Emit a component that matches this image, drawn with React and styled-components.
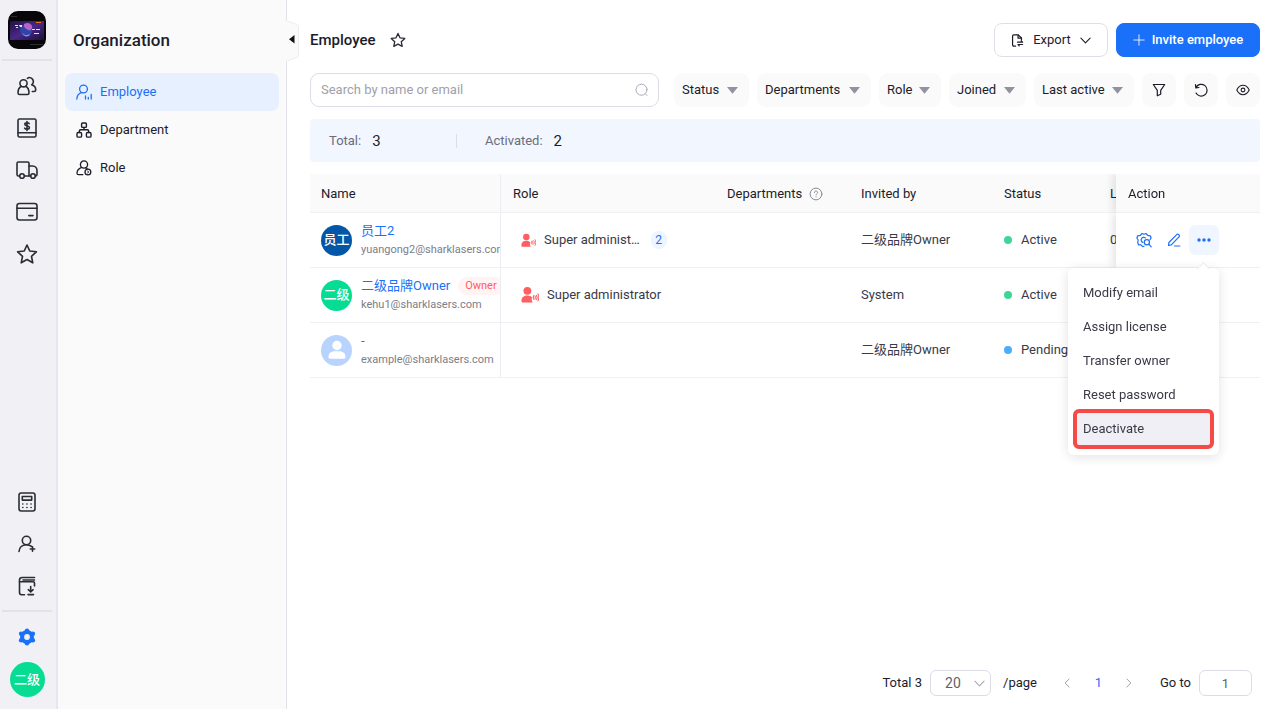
import React, { useState } from "react";
import styled, { createGlobalStyle, css } from "styled-components";

const GlobalStyle = createGlobalStyle`
  * {
    box-sizing: border-box;
  }
  body {
    margin: 0;
    background: #fff;
    color: #1c1c2b;
    font-family: Roboto, "Noto Sans CJK SC", sans-serif;
    font-size: 13px;
    line-height: 20px;
  }
  button, input, select {
    font: inherit;
    color: inherit;
  }
  button {
    padding: 0;
    border: 0;
    background: none;
    cursor: pointer;
  }
`;

/* ---------- icons ---------- */

const Svg = styled.svg`
  display: block;
  flex: none;
  fill: none;
  stroke: currentColor;
  stroke-width: ${(p) => p.$stroke || 1.6};
  stroke-linecap: round;
  stroke-linejoin: round;
`;

const UsersIcon = () => (
  <Svg width="20" height="20" viewBox="0 0 20 20">
    <circle cx="6.5" cy="7.3" r="3.6" />
    <path d="M4.3 10.3C2.2 11.5 1 13.8 1 16.8c0 1 .7 1.7 1.6 1.7h7.8c.9 0 1.6-.7 1.6-1.7 0-3-1.2-5.3-3.3-6.5" />
    <path d="M10.4 2.3a3.8 3.8 0 1 1 4.2 6.5c2.5.7 4.1 2.7 4.1 5.1 0 1-.6 1.6-1.6 1.6h-1.8" />
  </Svg>
);

const LedgerIcon = () => (
  <Svg width="20" height="20" viewBox="0 0 20 20">
    <rect x="1" y="1" width="18" height="18" rx="1.6" />
    <path d="M1 14.8h18" />
    <path d="M12.2 5.6c-.4-.6-1.2-.9-2.2-.9-1.3 0-2.2.6-2.2 1.6 0 2.3 4.6.9 4.6 3.2 0 1-1 1.7-2.4 1.7-1.1 0-2-.4-2.4-1.1M10 3.6v8.8" />
  </Svg>
);

const TruckIcon = () => (
  <Svg width="22" height="20" viewBox="0 0 22 20">
    <path d="M3.6 16H2.4A1.4 1.4 0 0 1 1 14.6V3.4A1.4 1.4 0 0 1 2.4 2h9.2A1.4 1.4 0 0 1 13 3.4V16H8.4" />
    <path d="M13 6h3.6c2.6 0 4.4 2 4.4 4.6v4a1.4 1.4 0 0 1-1.4 1.4h-.4M14.6 16H13" />
    <circle cx="6" cy="16" r="2.3" />
    <circle cx="17" cy="16" r="2.3" />
  </Svg>
);

const CardIcon = () => (
  <Svg width="22" height="20" viewBox="0 0 22 20">
    <rect x="1" y="1.5" width="20" height="16.5" rx="2.4" />
    <path d="M1 6.2h20M12.8 13.6h4.2" />
  </Svg>
);

const StarIcon = ({ size = 22 }) => (
  <Svg width={size} height={size} viewBox="0 0 24 24" $stroke={size > 18 ? 1.8 : 2}>
    <path d="M12 2.2l3 6.5 7.2.9-5.3 4.9 1.4 7.1L12 18.1l-6.3 3.5 1.4-7.1L1.8 9.6 9 8.7z" />
  </Svg>
);

const CalculatorIcon = () => (
  <Svg width="18" height="20" viewBox="0 0 18 20">
    <rect x="1" y="1" width="16" height="18" rx="2.2" />
    <rect x="4.3" y="4.5" width="9.4" height="3.6" />
    <path d="M4.8 12h.1M8.9 12h.1M13 12h.1M4.8 15.5h.1M8.900 15.5h.1M13 15.5h.1" />
  </Svg>
);

const UserPlusIcon = () => (
  <Svg width="18" height="20" viewBox="0 0 18 20">
    <circle cx="8.5" cy="6.5" r="4.2" />
    <path d="M1 17.5c.2-4 3.2-6.8 7.5-6.8 2.1 0 3.7.6 5 1.700M14.5 12.8v4.400M12.3 15h4.400" />
  </Svg>
);

const ArchiveIcon = () => (
  <Svg width="18" height="20" viewBox="0 0 18 20">
    <path d="M16.5 1.5H4.2C2.5 1.5 1.5 2.4 1.5 4v12.5c0 1.4.8 2.2 2 2.2h3" />
    <path d="M16.5 4H5M1.5 5.8c.3-.1.5-.1.9-.1h12.8c.8 0 1.3.4 1.3 1.2v3" />
    <path d="M12.7 10.5v5.3M10.3 13.7l2.4 2.3 2.4-2.3M10 18.6h5.5" />
  </Svg>
);

// round body with six teeth and a hole in the rail colour
const GearIcon = () => (
  <Svg width="18" height="18" viewBox="0 0 18 18">
    <g fill="currentColor" stroke="none">
      <circle cx="9" cy="9" r="7" />
      <circle cx="9" cy="2.7" r="2.2" />
      <circle cx="14.9" cy="5.700" r="2.2" />
      <circle cx="14.9" cy="12.3" r="2.2" />
      <circle cx="9" cy="15.3" r="2.2" />
      <circle cx="3.1" cy="12.3" r="2.2" />
      <circle cx="3.1" cy="5.7" r="2.2" />
      <circle cx="9" cy="9" r="2.900" fill="#f0f0f5" />
    </g>
  </Svg>
);

const EmployeeIcon = () => (
  <Svg width="16" height="16" viewBox="0 0 16 16" $stroke={1.3}>
    <circle cx="7.5" cy="5" r="3.9" />
    <path d="M.8 15c.2-3.3 2-5.5 4.7-6.3M9.5 12v3M12.3 13.5V15M15.2 10.5V15" />
  </Svg>
);

const DepartmentIcon = () => (
  <Svg width="16" height="16" viewBox="0 0 16 16" $stroke={1.4}>
    <rect x="5.6" y="1" width="4.8" height="4.4" rx="1" />
    <rect x="1" y="10.5" width="4.6" height="4.6" rx="1.2" />
    <rect x="10.4" y="10.5" width="4.6" height="4.6" rx="1.2" />
    <path d="M8 5.4V7.8M3.3 10.5V9.3c0-.9.6-1.5 1.5-1.5h6.4c.9 0 1.5.6 1.5 1.5v1.2" />
  </Svg>
);

const RoleIcon = () => (
  <Svg width="16" height="16" viewBox="0 0 16 16" $stroke={1.3}>
    <circle cx="8" cy="4.5" r="3.6" />
    <path d="M5.6 7.3C2.8 8.4 1 10.8 1 13.2c0 .9.6 1.5 1.5 1.5h4.3M9.6 7.7l1.4.7" />
    <circle cx="11.9" cy="12" r="2.9" />
    <path d="M11.6 11.1l1.2.9-1.2.9" strokeWidth="1" />
  </Svg>
);

const ExportIcon = () => (
  <Svg width="13" height="13" viewBox="0 0 14 14" $stroke={1.3}>
    <path d="M5 13H3.2C2.2 13 1.7 12.5 1.7 11.5v-9C1.7 1.5 2.2 1 3.2 1h4.6l3.5 3.3v2.200" />
    <path d="M7.6 1.2v3.3h3.5M7 8.8h5.5l-1.5-1.400M12.5 11.3H7.5l1.4 1.5" />
  </Svg>
);

const chevrons = {
  down: "M1 3.5l5 5 5-5",
  left: "M8.500 1.2L3.700 6l4.800 4.8",
  right: "M3.500 1.2L8.300 6l-4.800 4.8",
};

const ChevronIcon = ({ size = 11, dir = "down" }) => (
  <Svg width={size} height={size} viewBox="0 0 12 12" $stroke={1.2}>
    <path d={chevrons[dir]} />
  </Svg>
);

const PlusIcon = () => (
  <Svg width="12" height="12" viewBox="0 0 12 12" $stroke={1}>
    <path d="M6 .8v10.4M.8 6h10.4" opacity=".85" />
  </Svg>
);

const SearchIcon = () => (
  <Svg width="13" height="14" viewBox="0 0 13 14" $stroke={1}>
    <circle cx="6.5" cy="6.7" r="5.500" />
    <path d="M10.500 10.800l1.500 1.700" />
  </Svg>
);

const CaretIcon = () => (
  <Svg width="11" height="7" viewBox="0 0 11 7">
    <path d="M0 0h11L5.5 6.800z" fill="currentColor" stroke="none" />
  </Svg>
);

const FilterIcon = () => (
  <Svg width="14" height="14" viewBox="0 0 14 14" $stroke={1.2}>
    <path d="M1.3 1.5h11.4L8.7 7.400v3.900l-3.400 1.500V7.400z" />
  </Svg>
);

const ResetIcon = () => (
  <Svg width="14" height="14" viewBox="0 0 14 14" $stroke={1.2}>
    <path d="M2 4.4A5.9 5.9 0 1 1 2 10M1.5 1.7l.3 3.2 3.2-.4" />
  </Svg>
);

const EyeIcon = () => (
  <Svg width="14" height="14" viewBox="0 0 14 14" $stroke={1.1}>
    <path d="M.8 7C2.2 4.1 4.3 2.300 7 2.300S11.8 4.100 13.2 7c-1.4 2.900-3.500 4.700-6.200 4.700S2.200 9.900.8 7z" />
    <circle cx="7" cy="7" r="1.9" />
  </Svg>
);

const HelpIcon = () => (
  <Svg width="14" height="14" viewBox="0 0 14 14" $stroke={1}>
    <circle cx="7" cy="7" r="5.9" />
    <path d="M5.4 5.6c.1-1 .7-1.500 1.600-1.500s1.600.6 1.600 1.400c0 1.100-1.500 1.100-1.500 2.300M7.100 9.600v.2" />
  </Svg>
);

const AdminIcon = ({ size }) => (
  <Svg width={size} height={size} viewBox="0 0 17 17" $stroke={1}>
    <circle cx="6" cy="4.6" r="3.7" fill="currentColor" stroke="none" />
    <path
      d="M.4 14.200c0-3.200 2-5.300 5.600-5.300 2.300 0 3.700.7 4.500 2-.7 1.500-.5 3.300.7 4.700H1.700c-.9 0-1.300-.5-1.300-1.400z"
      fill="currentColor"
      stroke="none"
    />
    <path d="M12.3 8.800c-.9 1.200-.9 2.800 0 4M14.500 8.800c.9 1.200.9 2.800 0 4M16 7.600c1 1.900 1 4.500 0 6.400M13.400 9.600v2.400" />
  </Svg>
);

const GearSearchIcon = () => (
  <Svg width="16" height="16" viewBox="0 0 16 16" $stroke={1.2}>
    <path d="M8 14.200l-1.300.4-1.800-1.700-2.400-.1-.8-2.300L2.200 8 .9 6l.8-2.200 2.600-.4L6 1.500l2 .8 2-.8 1.700 1.900 2.600.4L15.100 6l-1 1.500" />
    <path d="M9.4 5.900A2.600 2.600 0 1 0 7 10.400" />
    <circle cx="10.9" cy="10.2" r="2.6" />
    <path d="M12.8 12.200l2.400 2.600" />
  </Svg>
);

const EditIcon = () => (
  <Svg width="14" height="14" viewBox="0 0 14 14" $stroke={1.2}>
    <path d="M1.5 12.5l.4-3L9.7 1.6a1.4 1.4 0 0 1 2 0l.3.3a1.4 1.4 0 0 1 0 2L4.3 11.900zM7.500 13h5.300" />
  </Svg>
);

const DotsIcon = () => (
  <Svg width="14" height="4" viewBox="0 0 14 4">
    <g fill="currentColor" stroke="none">
      <circle cx="2" cy="2" r="1.700" />
      <circle cx="7" cy="2" r="1.700" />
      <circle cx="12" cy="2" r="1.700" />
    </g>
  </Svg>
);

const LogoImage = () => (
  <Svg width="38" height="38" viewBox="0 0 38 38">
    <defs>
      <linearGradient id="glow" x1="0" y1="0" x2="1" y2="1">
        <stop offset="0" stopColor="#1f1440" />
        <stop offset=".5" stopColor="#4a2788" />
        <stop offset="1" stopColor="#1b1038" />
      </linearGradient>
    </defs>
    <g stroke="none">
      <rect width="38" height="38" rx="10" fill="#07070a" />
      <rect x="2" y="10" width="34" height="19" fill="url(#glow)" />
      <path d="M12 19c0-4 4-6 7-5s6 4 5 7-4 5-7 4-5-3-5-6z" fill="#2f45a8" />
      <path d="M16 13c3-2 7-1 8 2s-2 5-4 4-5-3-4-6z" fill="#b565c8" />
      <path d="M14 22c2 2 5 3 8 1l-1 2c-3 1-6 0-7-3z" fill="#7d8cf0" />
      <rect x="28" y="11" width="5" height="1" fill="#e8702a" />
      <path d="M7 14h3v1H7zm4 0h3v2h-2zM8 16h2v1H8zM24 18h3v1h-3zm4 0h4v1h-4zM26 22h5v1h-5z" fill="#e6def5" />
      <path d="M22 33h13v1H22zM3 5h6v1H3z" fill="#2c2c31" />
    </g>
  </Svg>
);

const PersonIcon = () => (
  <Svg width="18" height="20" viewBox="0 0 18 20">
    <g fill="#fff" stroke="none">
      <circle cx="9" cy="5.5" r="4.7" />
      <path d="M.5 17c0-3.500 2.600-5.700 6-5.700h5c3.400 0 6 2.200 6 5.700 0 1-.5 1.700-1.500 1.700H2C1 18.700.5 18 .5 17z" />
    </g>
  </Svg>
);

/* ---------- layout ---------- */

const Layout = styled.div`
  display: flex;
  height: 100vh;
  overflow: hidden;
`;

const Rail = styled.nav`
  display: flex;
  flex-direction: column;
  align-items: center;
  flex: none;
  width: 58px;
  padding: 11px 2px 12px 0;
  background: #f0f0f5;
  border-right: 2px solid #e6e6ee;
`;

const RailDivider = styled.hr`
  width: 50px;
  height: 2px;
  margin: ${(p) => p.$top}px 0 4px;
  border: 0;
  background: #e2e2e9;
`;

const RailButton = styled.button`
  display: flex;
  align-items: center;
  justify-content: center;
  width: 42px;
  height: 42px;
  color: ${(p) => (p.$active ? "#1a70f8" : "#2b2d36")};
`;

const RailSpacer = styled.div`
  flex: 1;
`;

const RailAccount = styled.div`
  margin-top: 4px;
`;

const Avatar = styled.span`
  display: flex;
  align-items: center;
  justify-content: center;
  flex: none;
  width: ${(p) => p.$size}px;
  height: ${(p) => p.$size}px;
  border-radius: 50%;
  overflow: hidden;
  background: ${(p) => p.$color};
  color: #fff;
  font-size: 13px;
  font-weight: 500;
  white-space: nowrap;
`;

const Sidebar = styled.aside`
  position: relative;
  flex: none;
  width: 229px;
  padding: 28px 7px 0;
  background: #fafafa;
  border-right: 1px solid #e2e2ea;
`;

const SidebarTitle = styled.h2`
  margin: 0 0 21px;
  padding-left: 8px;
  font-size: 17px;
  font-weight: 500;
  line-height: 24px;
`;

const SidebarLink = styled.a`
  display: flex;
  align-items: center;
  gap: 8px;
  height: 38px;
  padding: 0 11px;
  border-radius: 8px;
  color: inherit;
  text-decoration: none;

  ${(p) =>
    p.$active &&
    css`
      background: #e6f0ff;
      color: #1a70f8;
    `}
`;

const CollapseButton = styled.button`
  position: absolute;
  top: 20px;
  right: -14px;
  z-index: 1;
`;

const Main = styled.main`
  display: flex;
  flex-direction: column;
  flex: 1;
  min-width: 0;
  padding: 23px 20px 13px 23px;
`;

const Header = styled.header`
  display: flex;
  align-items: center;
  gap: 8px;
  height: 34px;
  margin-bottom: 16px;
`;

const Title = styled.h1`
  margin: 0 6px 0 0;
  font-size: 15px;
  font-weight: 500;
`;

const HeaderSpacer = styled.div`
  flex: 1;
`;

const Button = styled.button`
  display: flex;
  align-items: center;
  justify-content: center;
  gap: ${(p) => (p.$primary ? 7 : 9)}px;
  width: ${(p) => p.$width}px;
  height: 34px;
  border: 1px solid #dfdfe8;
  border-radius: 8px;
  background: #fff;

  ${(p) =>
    p.$primary &&
    css`
      border-color: #1a70f8;
      background: #1a70f8;
      color: #fff;
      font-weight: 500;
    `}
`;

const Filters = styled.div`
  display: flex;
  gap: 8px;
  margin-bottom: 12px;
`;

const SearchBox = styled.label`
  display: flex;
  align-items: center;
  flex: 1;
  min-width: 0;
  height: 34px;
  margin-right: 7px;
  padding: 0 10px;
  border: 1px solid #dcdce8;
  border-radius: 9px;
  color: #a9a9b6;

  input {
    flex: 1;
    min-width: 0;
    padding: 0;
    border: 0;
    outline: 0;
    background: none;
  }
  input::placeholder {
    color: #a0a0ab;
  }
`;

const FilterSelect = styled.label`
  display: grid;
  align-items: center;
  width: ${(p) => p.$width}px;
  height: 34px;
  border-radius: 9px;
  background: #fafafa;

  select {
    grid-area: 1 / 1;
    width: 100%;
    height: 100%;
    padding: 0 8px;
    border: 0;
    appearance: none;
    background: none;
  }
  svg {
    grid-area: 1 / 1;
    justify-self: end;
    margin-right: 11px;
    color: #9191a0;
    pointer-events: none;
  }
`;

const IconButton = styled.button`
  display: flex;
  align-items: center;
  justify-content: center;
  width: 34px;
  height: 34px;
  border-radius: 9px;
  background: #fafafa;
`;

const StarButton = styled.button`
  color: #2b2d36;
`;

const Summary = styled.dl`
  display: flex;
  align-items: center;
  height: 43px;
  margin: 0 0 12px;
  padding-left: 19px;
  border-radius: 4px;
  background: #f2f7ff;
`;

const Stat = styled.div`
  display: flex;
  align-items: center;
  gap: 11px;
  min-width: 127px;

  dt {
    color: #6c6c7b;
  }
  dd {
    margin: 0;
    font-size: 15px;
  }
`;

const StatDivider = styled.span`
  width: 1px;
  height: 14px;
  margin-right: 28px;
  background: #dcdfe8;
`;

const TableArea = styled.div`
  position: relative;
  flex: 1;
`;

const TableScroll = styled.div`
  overflow-x: auto;
  scrollbar-width: none;
`;

const Table = styled.table`
  width: 100%;
  min-width: 1100px;
  table-layout: fixed;
  border-spacing: 0;
`;

const pinned = css`
  position: sticky;
  right: 0;
  box-shadow: -3px 0 8px rgba(30, 30, 50, 0.12);
  clip-path: inset(0 0 0 -12px);
`;

const Th = styled.th`
  width: ${(p) => (p.$width ? `${p.$width}px` : "auto")};
  height: 39px;
  padding: 2px 0 0 ${(p) => p.$indent || 12}px;
  border-bottom: 1px solid #f0f0f4;
  border-right: ${(p) => (p.$divider ? "1px solid #ececf3" : 0)};
  background: #fafafa;
  font-weight: 400;
  text-align: left;
  white-space: nowrap;
  ${(p) => p.$pinned && pinned}
`;

const Td = styled.td`
  height: 55px;
  padding: 0 0 0 ${(p) => p.$indent || 12}px;
  overflow: hidden;
  border-bottom: 1px solid #f0f0f4;
  border-right: ${(p) => (p.$divider ? "1px solid #ececf3" : 0)};
  background: #fff;
  color: #3a3a47;
  white-space: nowrap;
  ${(p) => p.$pinned && pinned}
`;

const HeadLabel = styled.span`
  display: flex;
  align-items: center;
  gap: 7px;

  svg {
    color: #8c8c99;
  }
`;

const Person = styled.div`
  display: flex;
  align-items: center;
  gap: 9px;
`;

const PersonName = styled.div`
  display: flex;
  align-items: center;
  gap: 8px;
  height: 20px;

  a {
    color: #1a70f8;
    text-decoration: none;
  }
`;

const Email = styled.div`
  color: #7d7d88;
  font-size: 11px;
  line-height: 18px;
`;

const OwnerTag = styled.span`
  padding: 0 7px;
  border-radius: 9px;
  background: #fff3f3;
  color: #ff5c5c;
  font-size: 11px;
  line-height: 18px;
`;

const Role = styled.div`
  display: flex;
  align-items: center;
  gap: 8px;

  svg {
    color: #ff5f60;
  }
`;

const Count = styled.b`
  width: 16px;
  height: 18px;
  margin-left: 3px;
  border-radius: 8px;
  background: #edf5ff;
  color: #1a70f8;
  font-size: 12px;
  font-weight: 400;
  line-height: 18px;
  text-align: center;
`;

const Status = styled.span`
  display: flex;
  align-items: center;
  gap: 9px;

  &::before {
    content: "";
    width: 8px;
    height: 8px;
    border-radius: 50%;
    background: ${(p) => p.$color};
  }
`;

const Actions = styled.div`
  display: flex;
`;

const ActionButton = styled.button`
  display: flex;
  align-items: center;
  justify-content: center;
  width: 30px;
  height: 30px;
  border-radius: 6px;
  background: ${(p) => (p.$open ? "#f0f6ff" : "none")};
  color: #1a70f8;
`;

const Menu = styled.div`
  position: absolute;
  top: 94px;
  right: 41px;
  width: 151px;
  padding: 8px 8px 9px;
  border-radius: 6px;
  background: #fff;
  box-shadow: 0 2px 12px rgba(20, 20, 40, 0.12);

  &::before {
    content: "";
    position: absolute;
    top: -4px;
    right: 11px;
    width: 8px;
    height: 8px;
    border: 1px solid #ebebf1;
    border-width: 1px 0 0 1px;
    background: #fff;
    transform: rotate(45deg);
  }
`;

const MenuItem = styled.button`
  display: block;
  width: 100%;
  height: 34px;
  padding: 0 7px;
  color: #3a3a47;
  text-align: left;

  ${(p) =>
    p.$marked &&
    css`
      border-radius: 3px;
      background: #f0eff5;
      outline: 4px solid #f54a45;
      outline-offset: -1px;
    `}
`;

const Pagination = styled.footer`
  display: flex;
  align-items: center;
  justify-content: flex-end;
  padding-right: 8px;
`;

const PageSize = styled.label`
  display: grid;
  align-items: center;
  width: 61px;
  height: 26px;
  margin: 0 12px 0 8px;
  border: 1px solid #dcdce8;
  border-radius: 6px;

  select {
    grid-area: 1 / 1;
    width: 100%;
    height: 100%;
    padding: 0 14px;
    border: 0;
    appearance: none;
    background: none;
    color: #5f5f6b;
    font-size: 14px;
  }
  svg {
    grid-area: 1 / 1;
    justify-self: end;
    margin-right: 5px;
    color: #a9a9b6;
    pointer-events: none;
  }
`;

const PageButton = styled.button`
  display: flex;
  align-items: center;
  justify-content: center;
  width: 31px;
  height: 26px;
  color: ${(p) => (p.$current ? "#1a70f8" : "#a0a0ab")};
`;

const Pages = styled.div`
  display: flex;
  margin: 0 15px;
`;

const GoTo = styled.label`
  display: flex;
  align-items: center;
  gap: 8px;

  input {
    width: 53px;
    height: 26px;
    padding: 0;
    border: 1px solid #dcdce8;
    border-radius: 6px;
    background: #fff;
    color: #5f5f6b;
    text-align: center;
  }
`;

/* ---------- data ---------- */

const railItems = [
  ["Customers", UsersIcon],
  ["Billing", LedgerIcon],
  ["Delivery", TruckIcon],
  ["Cards", CardIcon],
  ["Favorites", StarIcon],
];

const railTools = [
  ["Calculator", CalculatorIcon],
  ["Add user", UserPlusIcon],
  ["Downloads", ArchiveIcon],
];

const sections = [
  ["Employee", EmployeeIcon],
  ["Department", DepartmentIcon],
  ["Role", RoleIcon],
];

const filters = [
  ["Status", 75],
  ["Departments", 114],
  ["Role", 62],
  ["Joined", 77],
  ["Last active", 100],
];

const employees = [
  {
    name: "员工2",
    email: "yuangong2@sharklasers.com",
    avatar: "员工",
    color: "#0457a7",
    role: "Super administrator",
    roleCount: 2,
    invitedBy: "二级品牌Owner",
    status: "Active",
    lastActive: "0",
  },
  {
    name: "二级品牌Owner",
    email: "kehu1@sharklasers.com",
    avatar: "二级",
    color: "#07dd92",
    owner: true,
    role: "Super administrator",
    invitedBy: "System",
    status: "Active",
  },
  {
    name: "-",
    email: "example@sharklasers.com",
    color: "#b9d3ff",
    invitedBy: "二级品牌Owner",
    status: "Pending",
  },
];

const statusColors = { Active: "#3dd598", Pending: "#4badff" };

const menuItems = [
  "Modify email",
  "Assign license",
  "Transfer owner",
  "Reset password",
  "Deactivate",
];

// leaves room for the counter when there is more than one role
const shorten = (text) => `${text.slice(0, 14)}…`;

function EmployeeRow({ data, open, onToggle }) {
  return (
    <tr>
      <Td $divider $indent={11}>
        <Person>
          <Avatar $size={31} $color={data.color}>
            {data.avatar || <PersonIcon />}
          </Avatar>
          <div>
            <PersonName>
              <a href="#detail">{data.name}</a>
              {data.owner && <OwnerTag>Owner</OwnerTag>}
            </PersonName>
            <Email>{data.email}</Email>
          </div>
        </Person>
      </Td>
      <Td $indent={20}>
        {data.role && (
          <Role>
            <AdminIcon size={data.roleCount ? 15 : 18} />
            <span title={data.role}>
              {data.roleCount ? shorten(data.role) : data.role}
            </span>
            {data.roleCount && <Count>{data.roleCount}</Count>}
          </Role>
        )}
      </Td>
      <Td />
      <Td>{data.invitedBy}</Td>
      <Td>
        <Status $color={statusColors[data.status]}>{data.status}</Status>
      </Td>
      <Td>{data.lastActive}</Td>
      <Td $pinned $indent={13}>
        {onToggle && (
          <Actions>
            <ActionButton aria-label="Permissions">
              <GearSearchIcon />
            </ActionButton>
            <ActionButton aria-label="Edit">
              <EditIcon />
            </ActionButton>
            <ActionButton aria-label="More" $open={open} onClick={onToggle}>
              <DotsIcon />
            </ActionButton>
          </Actions>
        )}
      </Td>
    </tr>
  );
}

function App() {
  const [menuOpen, setMenuOpen] = useState(true);
  const [search, setSearch] = useState("");
  const [page, setPage] = useState("1");

  return (
    <>
      <GlobalStyle />
      <Layout>
        <Rail>
          <LogoImage />
          <RailDivider $top={10} />
          {railItems.map(([label, Icon]) => (
            <RailButton key={label} aria-label={label}>
              <Icon />
            </RailButton>
          ))}
          <RailSpacer />
          {railTools.map(([label, Icon]) => (
            <RailButton key={label} aria-label={label}>
              <Icon />
            </RailButton>
          ))}
          <RailDivider $top={3} />
          <RailButton aria-label="Settings" $active>
            <GearIcon />
          </RailButton>
          <RailAccount>
            <Avatar $size={35} $color="#07dd92">
              二级
            </Avatar>
          </RailAccount>
        </Rail>

        <Sidebar>
          <SidebarTitle>Organization</SidebarTitle>
          {sections.map(([label, Icon]) => (
            <SidebarLink
              key={label}
              href={`#${label.toLowerCase()}`}
              $active={label === "Employee"}
            >
              <Icon />
              {label}
            </SidebarLink>
          ))}
          <CollapseButton aria-label="Collapse">
            <Svg width="14" height="42" viewBox="0 0 14 42" $stroke={1}>
              <path
                d="M0 .5l10 3.7c1.8.7 2.500 1.500 2.500 3.300v27c0 1.800-.7 2.600-2.500 3.300L0 41.500"
                fill="#fafafa"
                stroke="#ececf1"
              />
              <path d="M8.5 15v8.500L3 19.200z" fill="#111" stroke="none" />
            </Svg>
          </CollapseButton>
        </Sidebar>

        <Main>
          <Header>
            <Title>Employee</Title>
            <StarButton aria-label="Add to favorites">
              <StarIcon size={16} />
            </StarButton>
            <HeaderSpacer />
            <Button $width={114}>
              <ExportIcon />
              Export
              <ChevronIcon />
            </Button>
            <Button $width={144} $primary>
              <PlusIcon />
              Invite employee
            </Button>
          </Header>

          <Filters>
            <SearchBox>
              <input
                aria-label="Search by name or email"
                placeholder="Search by name or email"
                value={search}
                onChange={(e) => setSearch(e.target.value)}
              />
              <SearchIcon />
            </SearchBox>
            {filters.map(([label, width]) => (
              <FilterSelect key={label} $width={width}>
                <select aria-label={label}>
                  <option>{label}</option>
                </select>
                <CaretIcon />
              </FilterSelect>
            ))}
            <IconButton aria-label="Filter">
              <FilterIcon />
            </IconButton>
            <IconButton aria-label="Reset">
              <ResetIcon />
            </IconButton>
            <IconButton aria-label="Columns">
              <EyeIcon />
            </IconButton>
          </Filters>

          <Summary>
            <Stat>
              <dt>Total:</dt>
              <dd>3</dd>
            </Stat>
            <StatDivider />
            <Stat>
              <dt>Activated:</dt>
              <dd>2</dd>
            </Stat>
          </Summary>

          <TableArea>
            <TableScroll>
              <Table>
                <thead>
                  <tr>
                    <Th $width={191} $divider $indent={11}>
                      Name
                    </Th>
                    <Th $width={214}>Role</Th>
                    <Th $width={134}>
                      <HeadLabel>
                        Departments
                        <HelpIcon />
                      </HeadLabel>
                    </Th>
                    <Th $width={143}>Invited by</Th>
                    <Th $width={106}>Status</Th>
                    <Th>Last active</Th>
                    <Th $width={144} $pinned>
                      Action
                    </Th>
                  </tr>
                </thead>
                <tbody>
                  {employees.map((item, index) => (
                    <EmployeeRow
                      key={item.email}
                      data={item}
                      open={menuOpen}
                      onToggle={
                        index === 0 ? () => setMenuOpen(!menuOpen) : undefined
                      }
                    />
                  ))}
                </tbody>
              </Table>
            </TableScroll>
            {menuOpen && (
              <Menu>
                {menuItems.map((label) => (
                  <MenuItem key={label} $marked={label === "Deactivate"}>
                    {label}
                  </MenuItem>
                ))}
              </Menu>
            )}
          </TableArea>

          <Pagination>
            Total 3
            <PageSize>
              <select aria-label="Page size">
                <option>20</option>
              </select>
              <ChevronIcon />
            </PageSize>
            /page
            <Pages>
              <PageButton aria-label="Previous page">
                <ChevronIcon dir="left" size={10} />
              </PageButton>
              <PageButton $current>1</PageButton>
              <PageButton aria-label="Next page">
                <ChevronIcon dir="right" size={10} />
              </PageButton>
            </Pages>
            <GoTo>
              Go to
              <input value={page} onChange={(e) => setPage(e.target.value)} />
            </GoTo>
          </Pagination>
        </Main>
      </Layout>
    </>
  );
}

export default App;
